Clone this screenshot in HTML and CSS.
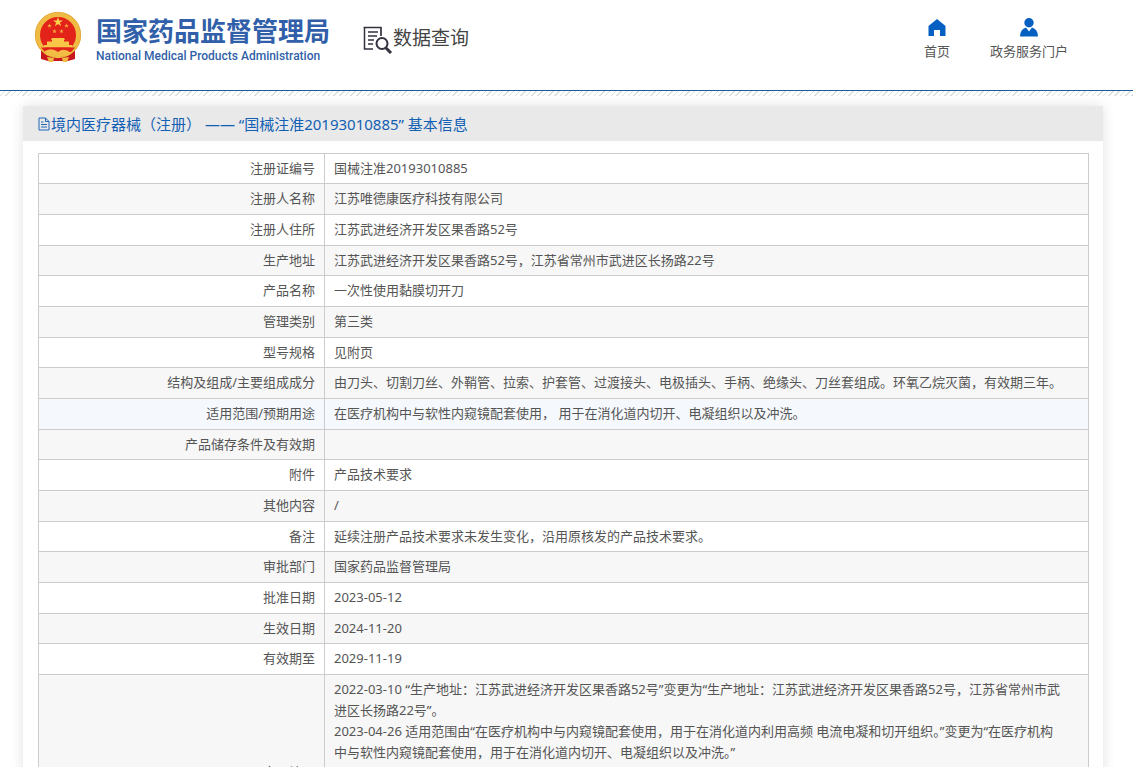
FILE: index.html
```html
<!DOCTYPE html>
<html lang="zh-CN">
<head>
  <meta charset="UTF-8">
  <title>数据查询 - 国家药品监督管理局</title>
  <link rel="stylesheet" href="styles.css">
</head>
<body>
  <header class="header">
    <a class="logo" href="#">
      <svg class="emblem" viewBox="0 0 48 52" aria-hidden="true">
        <path d="M7 34 L7 48 L14 50 H34 L41 48 L41 34 Z" fill="#c9171e"/>
        <circle cx="24" cy="24" r="20.500" fill="#e3231a" stroke="#f0bb42" stroke-width="5"/>
        <circle cx="24" cy="24" r="22.700" fill="none" stroke="#dda23a" stroke-width=".7"/>
        <path d="M24 6l1.200 3.500h3.700l-3 2.200 1.200 3.600-3.100-2.200-3.100 2.200 1.200-3.600-3-2.200h3.700z" fill="#fbd04a"/>
        <g fill="#f6a93c">
          <path id="star" d="M15.500 12.500l.6 1.600h1.600l-1.300 1 .5 1.600-1.400-1-1.400 1 .5-1.600-1.300-1h1.600z"/>
          <use href="#star" x="17"/>
          <use href="#star" x="5" y="5.500"/>
          <use href="#star" x="12" y="5.500"/>
        </g>
        <path d="M18 27h12l1 2h-1v1.500h5V34h3v2.500H10V34h3v-3.500h5V29h-1z" fill="#f8c747"/>
        <path d="M7 36.500h34L37 41H11z" fill="#e3231a"/>
        <path d="M11 40q7-4 13 1 6-5 13 1-3 4-6 2-4 0-5 3h-4q-1-3-5-3-4 2-6-2z" fill="#f3bd45"/>
        <path d="M13 46l7 1-1 4h-4zM28 47l7-1-2 5h-4z" fill="#f0bb42"/>
      </svg>
      <span class="logo-text">
        <span class="logo-cn">国家药品监督管理局</span>
        <span class="logo-en">National Medical Products Administration</span>
      </span>
    </a>
    <a class="section" href="#">
      <svg class="section-icon" viewBox="0 0 30 28" aria-hidden="true">
        <path d="M10 23H1.500V1" fill="none" stroke="#34323f" stroke-width="1.500"/>
        <path d="M.7 1.500h18M18 1v9" fill="none" stroke="#34323f" stroke-width="1.700"/>
        <path d="M5 6h10M5 10h9M5 14h6M5 18h5" stroke="#34323f" stroke-width="1.500"/>
        <circle cx="19" cy="17.500" r="5.500" fill="#fff" stroke="#34323f" stroke-width="2"/>
        <path d="M23 22l5 5" stroke="#34323f" stroke-width="3"/>
      </svg>
      <span>数据查询</span>
    </a>
    <nav class="nav">
      <a href="#">
        <svg class="nav-icon" viewBox="0 0 20 20" aria-hidden="true">
          <path d="M10 1L1.500 8v10H7v-6h6v6h5.500V8z" fill="#0560c2"/>
        </svg>
        首页
      </a>
      <a href="#">
        <svg class="nav-icon" viewBox="0 0 20 20" aria-hidden="true">
          <circle cx="10" cy="4.700" r="4.700" fill="#0560c2"/>
          <path d="M1 18.500q0-7 6-9l3 4 3-4q6 2 6 9z" fill="#0560c2"/>
        </svg>
        政务服务门户
      </a>
    </nav>
  </header>
  <div class="stripes"></div>

  <main class="panel">
    <h1 class="panel-title">
      <svg class="doc-icon" viewBox="0 0 12 14" aria-hidden="true">
        <path d="M1 1h6.500L11 4.500V13H1zM7.500 1v3.500H11M3 5h2.500M3 7.500h6M3 10h6" fill="none" stroke="#1f66b5"/>
      </svg>
      <span>境内医疗器械（注册） —— “国械注准20193010885” 基本信息</span>
    </h1>
    <table class="info">
      <tbody>
        <tr><th scope="row">注册证编号</th><td>国械注准20193010885</td></tr>
        <tr><th scope="row">注册人名称</th><td>江苏唯德康医疗科技有限公司</td></tr>
        <tr><th scope="row">注册人住所</th><td>江苏武进经济开发区果香路52号</td></tr>
        <tr><th scope="row">生产地址</th><td>江苏武进经济开发区果香路52号，江苏省常州市武进区长扬路22号</td></tr>
        <tr><th scope="row">产品名称</th><td>一次性使用黏膜切开刀</td></tr>
        <tr><th scope="row">管理类别</th><td>第三类</td></tr>
        <tr><th scope="row">型号规格</th><td>见附页</td></tr>
        <tr><th scope="row">结构及组成/主要组成成分</th><td>由刀头、切割刀丝、外鞘管、拉索、护套管、过渡接头、电极插头、手柄、绝缘头、刀丝套组成。环氧乙烷灭菌，有效期三年。</td></tr>
        <tr class="active"><th scope="row">适用范围/预期用途</th><td>在医疗机构中与软性内窥镜配套使用， 用于在消化道内切开、电凝组织以及冲洗。</td></tr>
        <tr><th scope="row">产品储存条件及有效期</th><td></td></tr>
        <tr><th scope="row">附件</th><td>产品技术要求</td></tr>
        <tr><th scope="row">其他内容</th><td>/</td></tr>
        <tr><th scope="row">备注</th><td>延续注册产品技术要求未发生变化，沿用原核发的产品技术要求。</td></tr>
        <tr><th scope="row">审批部门</th><td>国家药品监督管理局</td></tr>
        <tr><th scope="row">批准日期</th><td>2023-05-12</td></tr>
        <tr><th scope="row">生效日期</th><td>2024-11-20</td></tr>
        <tr><th scope="row">有效期至</th><td>2029-11-19</td></tr>
        <tr class="changes">
          <th scope="row">变更情况</th>
          <td>
            2022-03-10 “生产地址：江苏武进经济开发区果香路52号”变更为“生产地址：江苏武进经济开发区果香路52号，江苏省常州市武<br>
            进区长扬路22号”。<br>
            2023-04-26 适用范围由“在医疗机构中与内窥镜配套使用，用于在消化道内利用高频 电流电凝和切开组织。”变更为“在医疗机构<br>
            中与软性内窥镜配套使用，用于在消化道内切开、电凝组织以及冲洗。”
          </td>
        </tr>
      </tbody>
    </table>
  </main>
</body>
</html>
```

FILE: styles.css
```css
* {
  box-sizing: border-box;
}
body {
  margin: 0;
  background: #fff;
  color: #555;
  font-family: "Noto Sans", "Noto Sans CJK SC", sans-serif;
  font-size: 13px;
}
a {
  color: inherit;
  text-decoration: none;
}
svg {
  display: block;
  flex: none;
}

/* header */
.header {
  display: flex;
  align-items: flex-start;
  height: 91px;
  padding: 11px 65px 0 34px;
  border-bottom: 1px solid #1d5c9c;
}
.logo {
  display: flex;
  gap: 14px;
  color: #315fa9;
}
.emblem {
  width: 48px;
  height: 52px;
}
.logo-text {
  display: flex;
  flex-direction: column;
}
.logo-cn {
  font-size: 26px;
  line-height: 40px;
  font-weight: bold;
}
.logo-en {
  font-family: Roboto, sans-serif;
  font-size: 12px;
  line-height: 10px;
  font-weight: 500;
}
.section {
  display: flex;
  margin: 10px 0 0 33px;
  color: #444;
  font-size: 19px;
  line-height: 34px;
}
.section-icon {
  width: 30px;
  height: 28px;
  margin-top: 5px;
}
.nav {
  display: flex;
  gap: 40px;
  margin: 7px 0 0 auto;
}
.nav a {
  display: flex;
  flex-direction: column;
  align-items: center;
  gap: 3px;
  line-height: 20px;
}
.nav-icon {
  width: 20px;
  height: 20px;
}
.stripes {
  height: 5px;
  background: repeating-linear-gradient(135deg, #fff 0 3px, #ddd 3px 4px);
}

/* detail panel */
.panel {
  margin: 10px 30px 0 23px;
  padding-bottom: 20px;
  box-shadow: 0 0 12px rgba(0, 0, 0, 0.12);
}
.panel-title {
  display: flex;
  align-items: center;
  gap: 1px;
  height: 35px;
  margin: 0 0 12px;
  padding-left: 15px;
  background: #e9e9e9;
  color: #1260b4;
  font-size: 15px;
  line-height: 20px;
  font-weight: normal;
}
.doc-icon {
  width: 12px;
  height: 14px;
}
.info {
  width: calc(100% - 29px);
  margin-left: 15px;
  border-collapse: collapse;
  table-layout: fixed;
  line-height: 21px;
}
.info th,
.info td {
  padding: 4px 9px 5px;
  border: 1px solid #ccc;
}
.info th {
  width: 286px;
  font-weight: normal;
  text-align: right;
}
.info td {
  height: 31px;
  white-space: nowrap;
}
.info tr:nth-child(even) {
  background: #f7f7f7;
}
.info tr:nth-child(3n+1) > * {
  height: 30px;
  padding-bottom: 4px;
}
.info .active {
  background: #f5f9fd;
}
.info .changes > * {
  height: 196px;
}
.info .changes td {
  vertical-align: top;
}
```
